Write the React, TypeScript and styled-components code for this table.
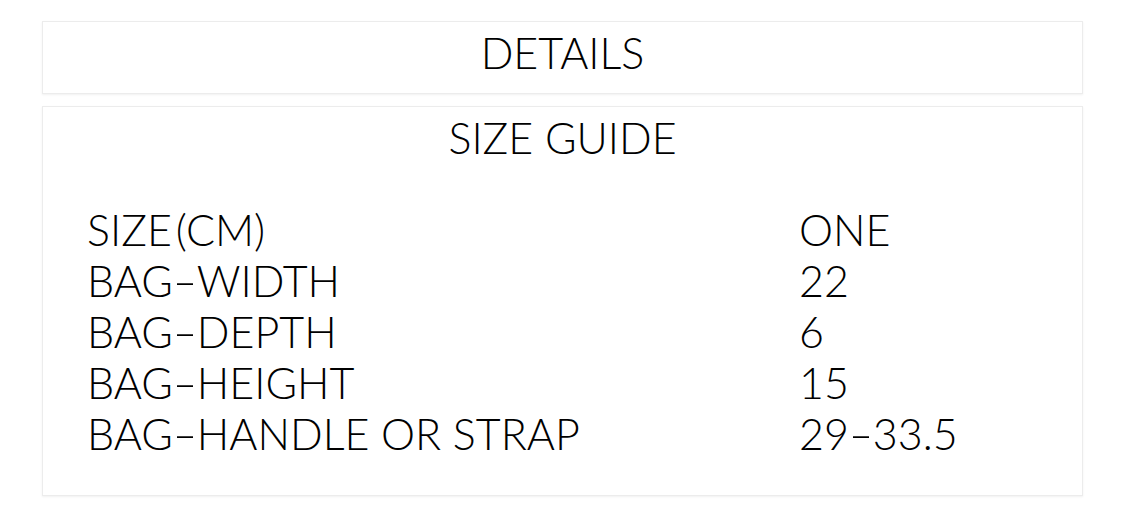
import React from "react";
import styled, { createGlobalStyle } from "styled-components";

const GlobalStyle = createGlobalStyle`
  body {
    margin: 0;
    background: #fff;
    font-family: Lato, "Open Sans", "Noto Sans CJK KR", sans-serif;
    color: #000;
  }
`;

const Page = styled.div`
  display: flex;
  flex-direction: column;
  gap: 12px;
  padding: 21px 42px 20px;
`;

const Card = styled.section`
  background: #fff;
  border: 1px solid #ececec;
  box-shadow: 0 1px 2px rgba(0, 0, 0, 0.06);
`;

const CardTitle = styled.h2`
  margin: 0;
  height: 71px;
  display: flex;
  align-items: center;
  justify-content: center;
  padding-bottom: 9px;
  box-sizing: border-box;
  font-size: 43px;
  font-weight: 300;
  line-height: 50px;
`;

const GuideBody = styled.div`
  padding: 0 46px 36px 44px;
`;

const SizeTable = styled.div`
  display: grid;
  grid-template-columns: 712px 1fr;
  margin-top: 26px;
  font-size: 43px;
  line-height: 51px;
`;

const Cell = styled.div`
  font-weight: 300;
  white-space: nowrap;
`;

const Paren = styled.span`
  margin-left: 4px;
`;

/* the source font draws a long hyphen */
const Dash = styled.span`
  display: inline-block;
  margin: 0 4px;
  transform: scaleX(1.6);
`;

function withDash(text: string) {
  const parts = text.split("-");
  return parts.map((part, i) => (
    <React.Fragment key={i}>
      {i > 0 && <Dash>-</Dash>}
      {part}
    </React.Fragment>
  ));
}

const rows: [string, string][] = [
  ["BAG-WIDTH", "22"],
  ["BAG-DEPTH", "6"],
  ["BAG-HEIGHT", "15"],
  ["BAG-HANDLE OR STRAP", "29-33.5"],
];

export default function App() {
  return (
    <>
      <GlobalStyle />
      <Page>
        <Card>
          <CardTitle>DETAILS</CardTitle>
        </Card>
        <Card>
          <CardTitle>SIZE GUIDE</CardTitle>
          <GuideBody>
            <SizeTable>
              <Cell>
                SIZE<Paren>(CM)</Paren>
              </Cell>
              <Cell>ONE</Cell>
              {rows.map(([label, value]) => (
                <React.Fragment key={label}>
                  <Cell>{withDash(label)}</Cell>
                  <Cell>{withDash(value)}</Cell>
                </React.Fragment>
              ))}
            </SizeTable>
          </GuideBody>
        </Card>
      </Page>
    </>
  );
}
